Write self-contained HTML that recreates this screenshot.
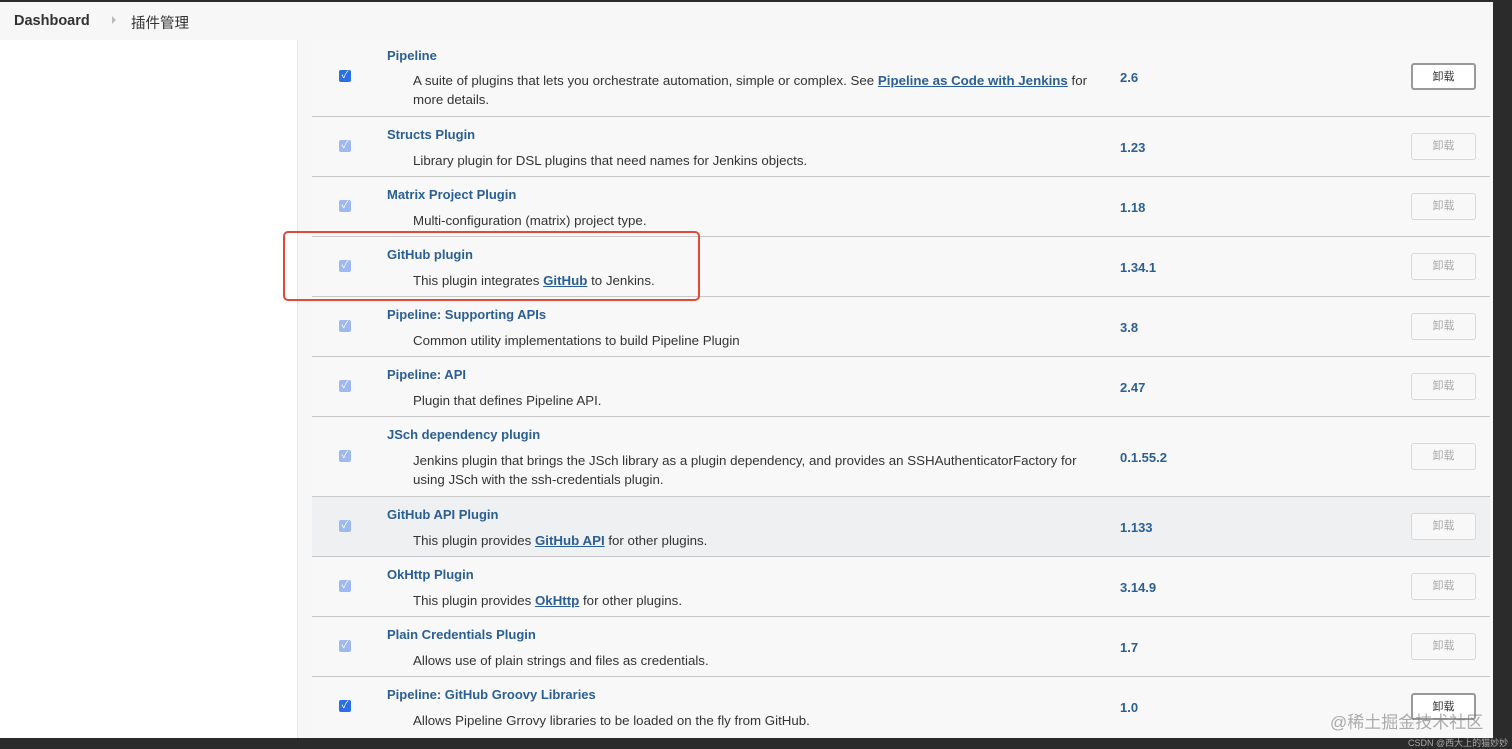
<!DOCTYPE html>
<html><head><meta charset="utf-8"><style>
*{margin:0;padding:0;box-sizing:border-box}
body{width:1512px;height:749px;overflow:hidden;background:#2b2b2b;font-family:"Liberation Sans","Noto Sans CJK SC",sans-serif;position:relative}
#page{position:absolute;left:0;top:2px;width:1493px;height:736px;background:#f7f7f7;overflow:hidden}
#crumb{position:absolute;left:0;top:0;width:1493px;height:38px;background:#f7f7f7}
#crumb .d{position:absolute;left:14px;top:11px;font-size:14.5px;font-weight:bold;color:#333}
#crumb .a{position:absolute;left:112px;top:14px;width:0;height:0;border-left:4px solid #bbb;border-top:4px solid transparent;border-bottom:4px solid transparent}
#crumb .z{position:absolute;left:131px;top:10px;font-size:14.5px;color:#333}
#side{position:absolute;left:0;top:38px;width:298px;height:700px;background:#fff;border-right:1px solid #e6e6e6}
.row{position:absolute;left:312px;width:1178px;border-bottom:1px solid #c8c8c8;background:#f8f8f8}
.row.h{background:#eef0f2}
.cb{position:absolute;left:27px;width:12px;height:12px;border-radius:2px;background:#9db9ef;color:#fff;font-size:10px;line-height:12px;text-align:center}
.cb.on{background:#2a6ee8}
.n{position:absolute;left:75px;font-size:13px;font-weight:bold;color:#2b5f93}
.ds{position:absolute;left:101px;font-size:13.3px;color:#333;line-height:19px;width:682px}
.ds a{color:#2b5f93;font-weight:bold;text-decoration:underline}
.v{position:absolute;left:808px;font-size:13px;font-weight:bold;color:#2b5f93}
.b{position:absolute;left:1099px;width:65px;height:27px;border:1px solid #d8d8d8;border-radius:3px;background:#f8f8f8;color:#aaa;font-size:11px;text-align:center;line-height:25px}
.b.on{border:2px solid #999;background:#fff;color:#333}
#red{position:absolute;left:283px;top:229px;width:417px;height:70px;border:2px solid #e04a3a;border-radius:5px}
#wm{position:absolute;left:1330px;top:706px;font-size:17px;color:rgba(120,120,120,.6)}
#csdn{position:absolute;left:1408px;top:736px;font-size:9px;color:#aaa}
</style></head><body>
<div id="page">
<div id="crumb"><span class="d">Dashboard</span><span class="a"></span><span class="z">插件管理</span></div>
<div id="side"></div>

<div class="row" style="top:37px;height:78px"><div class="cb on" style="top:31px">✓</div><div class="n" style="top:9px">Pipeline</div><div class="ds" style="top:32px">A suite of plugins that lets you orchestrate automation, simple or complex. See <a>Pipeline as Code with Jenkins</a> for more details.</div><div class="v" style="top:31px">2.6</div><div class="b on" style="top:24px">卸载</div></div>

<div class="row" style="top:115px;height:60px"><div class="cb" style="top:23px">✓</div><div class="n" style="top:10px">Structs Plugin</div><div class="ds" style="top:34px">Library plugin for DSL plugins that need names for Jenkins objects.</div><div class="v" style="top:23px">1.23</div><div class="b" style="top:16px">卸载</div></div>

<div class="row" style="top:175px;height:60px"><div class="cb" style="top:23px">✓</div><div class="n" style="top:10px">Matrix Project Plugin</div><div class="ds" style="top:34px">Multi-configuration (matrix) project type.</div><div class="v" style="top:23px">1.18</div><div class="b" style="top:16px">卸载</div></div>

<div class="row" style="top:235px;height:60px"><div class="cb" style="top:23px">✓</div><div class="n" style="top:10px">GitHub plugin</div><div class="ds" style="top:34px">This plugin integrates <a>GitHub</a> to Jenkins.</div><div class="v" style="top:23px">1.34.1</div><div class="b" style="top:16px">卸载</div></div>

<div class="row" style="top:295px;height:60px"><div class="cb" style="top:23px">✓</div><div class="n" style="top:10px">Pipeline: Supporting APIs</div><div class="ds" style="top:34px">Common utility implementations to build Pipeline Plugin</div><div class="v" style="top:23px">3.8</div><div class="b" style="top:16px">卸载</div></div>

<div class="row" style="top:355px;height:60px"><div class="cb" style="top:23px">✓</div><div class="n" style="top:10px">Pipeline: API</div><div class="ds" style="top:34px">Plugin that defines Pipeline API.</div><div class="v" style="top:23px">2.47</div><div class="b" style="top:16px">卸载</div></div>

<div class="row" style="top:415px;height:80px"><div class="cb" style="top:33px">✓</div><div class="n" style="top:10px">JSch dependency plugin</div><div class="ds" style="top:34px">Jenkins plugin that brings the JSch library as a plugin dependency, and provides an SSHAuthenticatorFactory for using JSch with the ssh-credentials plugin.</div><div class="v" style="top:33px">0.1.55.2</div><div class="b" style="top:26px">卸载</div></div>

<div class="row h" style="top:495px;height:60px"><div class="cb" style="top:23px">✓</div><div class="n" style="top:10px">GitHub API Plugin</div><div class="ds" style="top:34px">This plugin provides <a>GitHub API</a> for other plugins.</div><div class="v" style="top:23px">1.133</div><div class="b" style="top:16px">卸载</div></div>

<div class="row" style="top:555px;height:60px"><div class="cb" style="top:23px">✓</div><div class="n" style="top:10px">OkHttp Plugin</div><div class="ds" style="top:34px">This plugin provides <a>OkHttp</a> for other plugins.</div><div class="v" style="top:23px">3.14.9</div><div class="b" style="top:16px">卸载</div></div>

<div class="row" style="top:615px;height:60px"><div class="cb" style="top:23px">✓</div><div class="n" style="top:10px">Plain Credentials Plugin</div><div class="ds" style="top:34px">Allows use of plain strings and files as credentials.</div><div class="v" style="top:23px">1.7</div><div class="b" style="top:16px">卸载</div></div>

<div class="row" style="top:675px;height:70px;border:none"><div class="cb on" style="top:23px">✓</div><div class="n" style="top:10px">Pipeline: GitHub Groovy Libraries</div><div class="ds" style="top:34px">Allows Pipeline Grrovy libraries to be loaded on the fly from GitHub.</div><div class="v" style="top:23px">1.0</div><div class="b on" style="top:16px">卸载</div></div>

<div id="red"></div>
<div id="wm">@稀土掘金技术社区</div>
</div>
<div id="csdn">CSDN @西大上的猫妙妙</div>
</body></html>
